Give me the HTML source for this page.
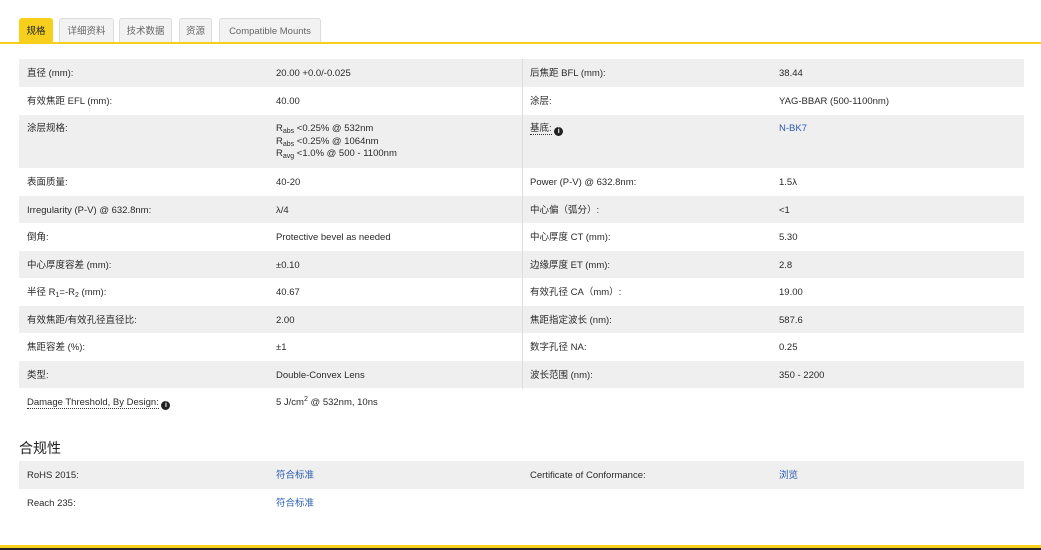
<!DOCTYPE html>
<html><head><meta charset="utf-8"><style>
*{margin:0;padding:0;box-sizing:border-box}
body{width:1041px;height:550px;background:#fff;font-family:"Liberation Sans","Noto Sans CJK SC",sans-serif;font-size:9.5px;color:#2a2a2a;position:relative;overflow:hidden}
.tab{position:absolute;top:18px;height:25px;background:#f2f2f2;border:1px solid #ddd;border-bottom:none;border-radius:3px 3px 0 0;font-size:9.5px;color:#666;line-height:26px;text-align:center}
.tab.on{background:#f7cf1d;border-color:#f7cf1d;color:#222}
.yl{position:absolute;left:0;top:42px;width:1041px;height:2px;background:#f7cf1d}
.row{position:absolute;left:19px;width:1005px}
.row.g{background:#efefef}
.row span{position:absolute;top:1px}
.c1{left:8px}.c2{left:257px}.c3{left:511px}.c4{left:760px}
.vd{position:absolute;left:522px;top:59px;width:1px;height:330px;background:#ddd}
a{color:#2a5db0;text-decoration:none}
.dot{border-bottom:1px dotted #333}
.i{display:inline-block;width:9px;height:9px;border-radius:50%;background:#222;color:#fff;font-size:7px;line-height:9px;text-align:center;font-weight:bold;vertical-align:-1px}
sub,sup{font-size:7px;line-height:0}
sub{vertical-align:-2px}sup{vertical-align:4px}
h3{position:absolute;left:19px;top:438px;font-size:14px;font-weight:normal;color:#222}
</style></head><body>
<div class="tab on" style="left:19px;width:34px">规格</div>
<div class="tab" style="left:59px;width:55px">详细资料</div>
<div class="tab" style="left:119px;width:53px">技术数据</div>
<div class="tab" style="left:179px;width:33px">资源</div>
<div class="tab" style="left:219px;width:102px">Compatible Mounts</div>
<div class="yl"></div>

<div class="row g" style="top:59px;height:28px;line-height:28px"><span class="c1">直径 (mm):</span><span class="c2">20.00 +0.0/-0.025</span><span class="c3">后焦距 BFL (mm):</span><span class="c4">38.44</span></div>
<div class="row" style="top:87px;height:28px;line-height:28px"><span class="c1">有效焦距 EFL (mm):</span><span class="c2">40.00</span><span class="c3">涂层:</span><span class="c4">YAG-BBAR (500-1100nm)</span></div>
<div class="row g" style="top:115px;height:53px;line-height:12.5px"><span class="c1" style="top:8px">涂层规格:</span><span class="c2" style="top:8px">R<sub>abs</sub> &lt;0.25% @ 532nm<br>R<sub>abs</sub> &lt;0.25% @ 1064nm<br>R<sub>avg</sub> &lt;1.0% @ 500 - 1100nm</span><span class="c3" style="top:8px"><span class="dot" style="position:static">基底:</span> <span class="i" style="position:relative">i</span></span><span class="c4" style="top:8px"><a>N-BK7</a></span></div>
<div class="row" style="top:168px;height:27.5px;line-height:27.5px"><span class="c1">表面质量:</span><span class="c2">40-20</span><span class="c3">Power (P-V) @ 632.8nm:</span><span class="c4">1.5λ</span></div>
<div class="row g" style="top:195.5px;height:27.5px;line-height:27.5px"><span class="c1">Irregularity (P-V) @ 632.8nm:</span><span class="c2">λ/4</span><span class="c3">中心偏（弧分）:</span><span class="c4">&lt;1</span></div>
<div class="row" style="top:223px;height:27.5px;line-height:27.5px"><span class="c1">倒角:</span><span class="c2">Protective bevel as needed</span><span class="c3">中心厚度 CT (mm):</span><span class="c4">5.30</span></div>
<div class="row g" style="top:250.5px;height:27.5px;line-height:27.5px"><span class="c1">中心厚度容差 (mm):</span><span class="c2">±0.10</span><span class="c3">边缘厚度 ET (mm):</span><span class="c4">2.8</span></div>
<div class="row" style="top:278px;height:27.5px;line-height:27.5px"><span class="c1">半径 R<sub>1</sub>=-R<sub>2</sub> (mm):</span><span class="c2">40.67</span><span class="c3">有效孔径 CA（mm）:</span><span class="c4">19.00</span></div>
<div class="row g" style="top:305.5px;height:27.5px;line-height:27.5px"><span class="c1">有效焦距/有效孔径直径比:</span><span class="c2">2.00</span><span class="c3">焦距指定波长 (nm):</span><span class="c4">587.6</span></div>
<div class="row" style="top:333px;height:27.5px;line-height:27.5px"><span class="c1">焦距容差 (%):</span><span class="c2">±1</span><span class="c3">数字孔径 NA:</span><span class="c4">0.25</span></div>
<div class="row g" style="top:360.5px;height:27.5px;line-height:27.5px"><span class="c1">类型:</span><span class="c2">Double-Convex Lens</span><span class="c3">波长范围 (nm):</span><span class="c4">350 - 2200</span></div>
<div class="row" style="top:388px;height:28px;line-height:28px"><span class="c1"><span class="dot" style="position:static">Damage Threshold, By Design:</span> <span class="i" style="position:relative">i</span></span><span class="c2">5 J/cm<sup>2</sup> @ 532nm, 10ns</span></div>
<div class="vd"></div>

<h3>合规性</h3>
<div class="row g" style="top:461px;height:28px;line-height:28px"><span class="c1">RoHS 2015:</span><span class="c2"><a>符合标准</a></span><span class="c3">Certificate of Conformance:</span><span class="c4"><a>浏览</a></span></div>
<div class="row" style="top:489px;height:28px;line-height:28px"><span class="c1">Reach 235:</span><span class="c2"><a>符合标准</a></span></div>

<div style="position:absolute;left:0;top:545px;width:1041px;height:3px;background:#f7cf1d"></div>
<div style="position:absolute;left:0;top:548px;width:1041px;height:2px;background:#222"></div>
</body></html>
